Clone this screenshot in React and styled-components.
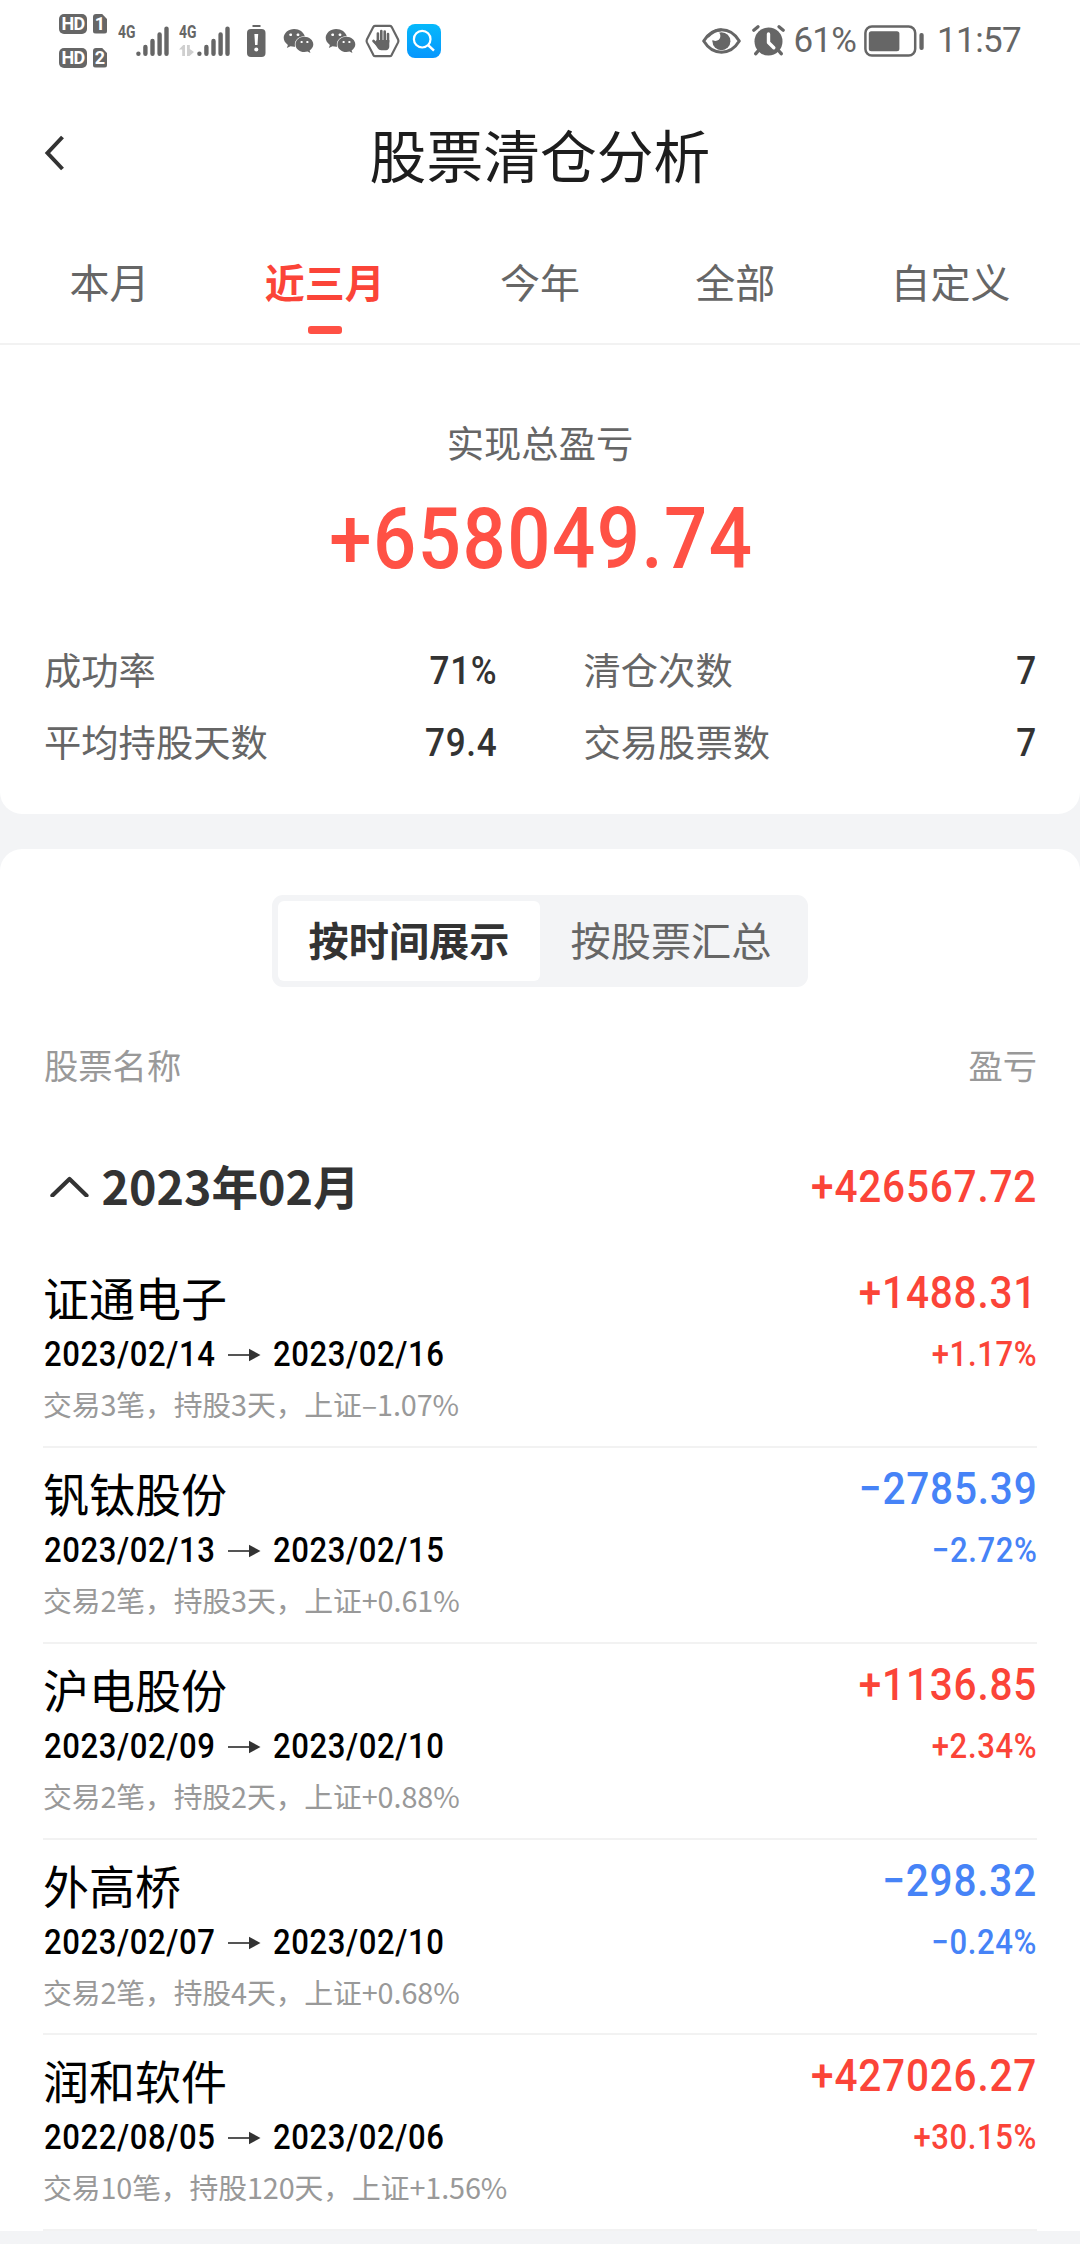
import React from "react";
import styled, { createGlobalStyle } from "styled-components";
import { FaWeixin } from "react-icons/fa";

const RED = "#fb4438";
const BLUE = "#4683f7";
const ICON = "#666666";

const tabs = ["本月", "近三月", "今年", "全部", "自定义"];

const stats = [
  { label: "成功率", value: "71%" },
  { label: "清仓次数", value: "7" },
  { label: "平均持股天数", value: "79.4" },
  { label: "交易股票数", value: "7" },
];

const trades = [
  {
    name: "证通电子",
    from: "2023/02/14",
    to: "2023/02/16",
    detail: "交易3笔，持股3天，上证–1.07%",
    amount: "+1488.31",
    percent: "+1.17%",
  },
  {
    name: "钒钛股份",
    from: "2023/02/13",
    to: "2023/02/15",
    detail: "交易2笔，持股3天，上证+0.61%",
    amount: "−2785.39",
    percent: "−2.72%",
    loss: true,
  },
  {
    name: "沪电股份",
    from: "2023/02/09",
    to: "2023/02/10",
    detail: "交易2笔，持股2天，上证+0.88%",
    amount: "+1136.85",
    percent: "+2.34%",
  },
  {
    name: "外高桥",
    from: "2023/02/07",
    to: "2023/02/10",
    detail: "交易2笔，持股4天，上证+0.68%",
    amount: "−298.32",
    percent: "−0.24%",
    loss: true,
  },
  {
    name: "润和软件",
    from: "2022/08/05",
    to: "2023/02/06",
    detail: "交易10笔，持股120天，上证+1.56%",
    amount: "+427026.27",
    percent: "+30.15%",
  },
];

function App() {
  return (
    <>
      <GlobalStyle />
      <Page>
        <TopCard>
          <StatusBar />
          <TitleBar>
            <BackIcon />
            <Title>股票清仓分析</Title>
          </TitleBar>
          <Tabs>
            {tabs.map((tab, i) => (
              <Tab key={tab} $active={i === 1}>
                {tab}
              </Tab>
            ))}
          </Tabs>
          <TotalLabel>实现总盈亏</TotalLabel>
          <Total>+658049.74</Total>
          <Stats>
            {stats.map((s) => (
              <Stat key={s.label}>
                <span>{s.label}</span>
                <StatValue>{s.value}</StatValue>
              </Stat>
            ))}
          </Stats>
        </TopCard>

        <ListCard>
          <Segment>
            <SegmentItem $active>按时间展示</SegmentItem>
            <SegmentItem>按股票汇总</SegmentItem>
          </Segment>
          <ColumnHead>
            <span>股票名称</span>
            <span>盈亏</span>
          </ColumnHead>
          <MonthRow>
            <Month>
              <ChevronUp />
              2023年02月
            </Month>
            <Amount>+426567.72</Amount>
          </MonthRow>
          {trades.map((t) => (
            <Trade key={t.name} {...t} />
          ))}
        </ListCard>
      </Page>
    </>
  );
}

const Trade = ({ name, from, to, detail, amount, percent, loss }) => (
  <TradeRow>
    <div>
      <StockName>{name}</StockName>
      <Dates>
        <DateText>{from}</DateText>
        <Arrow />
        <DateText>{to}</DateText>
      </Dates>
      <Detail>{detail}</Detail>
    </div>
    <TradeRight>
      <Amount $loss={loss}>{amount}</Amount>
      <Percent $loss={loss}>{percent}</Percent>
    </TradeRight>
  </TradeRow>
);

const StatusBar = () => (
  <Bar>
    <HdColumn>
      <HdRow>
        <Hd>HD</Hd>
        <Sim>1</Sim>
      </HdRow>
      <HdRow>
        <Hd>HD</Hd>
        <Sim>2</Sim>
      </HdRow>
    </HdColumn>
    <Signal />
    <Signal data />
    <BatteryAlert />
    <Wechat />
    <Wechat />
    <HandBadge />
    <SearchBadge />
    <Spacer />
    <EyeIcon />
    <AlarmIcon />
    <BatteryText>61%</BatteryText>
    <BatteryIcon />
    <Clock>11:57</Clock>
  </Bar>
);

const Signal = ({ data }) => (
  <SignalBox>
    <Net>
      <NetLabel>4G</NetLabel>
      {data && (
        <svg width="15" height="11" viewBox="0 0 15 11" fill="#cfcfcf">
          <path d="M6 0v11H3.2V4.6H0L4.2 0zM8 0h2.8v4l4.2 3L10.500 11H8z" />
        </svg>
      )}
    </Net>
    <svg width="33" height="32" viewBox="0 0 33 32" stroke={ICON} strokeWidth="4.4" strokeLinecap="round">
      <path d="M2.4 28.6v.2M9.4 22v6.8M16.5 16v12.8M23.6 9.4v19.4M30.5 3.6v25.2" />
    </svg>
  </SignalBox>
);

const BatteryAlert = () => (
  <Glyph $ml={17} width="19" height="32" viewBox="0 0 19 32">
    <path d="M5.5 1h8" stroke={ICON} strokeWidth="2" />
    <rect y="4" width="18.5" height="28" rx="4" fill={ICON} />
    <path d="M7.4 9h3.8l-.7 11H8.1z" fill="#fff" />
    <circle cx="9.3" cy="24.4" r="2" fill="#fff" />
  </Glyph>
);

const HandBadge = () => (
  <Glyph $ml={9} width="35" height="34" viewBox="0 0 35 34">
    <path
      d="M10.2 1.8h14.6c.8 0 1.4.4 1.8 1l6.5 12.7c.4.9.4 2 0 2.9l-6.5 12.7c-.4.7-1 1.1-1.8 1.1H10.2c-.8 0-1.4-.4-1.8-1.1L1.9 18.4c-.4-.9-.4-2 0-2.9L8.4 2.8c.4-.6 1-1 1.800-1z"
      fill="none"
      stroke={ICON}
      strokeWidth="2.2"
    />
    {/* open palm: four fingers and a thumb */}
    <path
      d="M12.9 18V9.5M16.3 17V7M19.7 17V7.5M23 18V10M13 21.500l-4.5-4.5"
      stroke={ICON}
      strokeWidth="2.6"
      strokeLinecap="round"
    />
    <path d="M11.6 16h12.7v6.5c0 2-1.3 3.7-3.3 3.7h-4.8c-1.6 0-2.7-.7-3.5-2l-3.2-5z" fill={ICON} />
  </Glyph>
);

const SearchBadge = () => (
  <Glyph $ml={7} width="34" height="34" viewBox="0 0 34 34">
    <defs>
      <linearGradient id="searchBg" x1="0" y1="0" x2="0" y2="1">
        <stop offset="0" stopColor="#05b9fb" />
        <stop offset="1" stopColor="#0796fd" />
      </linearGradient>
    </defs>
    <rect width="34" height="34" rx="8" fill="url(#searchBg)" />
    <circle cx="15.2" cy="15.2" r="8.3" fill="none" stroke="#fff" strokeWidth="2.2" />
    <path d="M21 21l6 5.6" stroke="#fff" strokeWidth="2.4" />
  </Glyph>
);

const EyeIcon = () => (
  <Glyph width="39" height="26" viewBox="0 0 39 26">
    <path
      d="M1.7 13C6 6 12 1.8 19.5 1.8S33 6 37.3 13C33 20 27 24.2 19.5 24.2S6 20 1.7 13z"
      fill="none"
      stroke={ICON}
      strokeWidth="3"
      strokeLinejoin="round"
    />
    <circle cx="19.4" cy="13.2" r="9" fill={ICON} />
    <circle cx="13.4" cy="8" r="5" fill="#fff" />
    <path d="M5.5 8.8C9.5 4.6 14 2 19.5 1.8" fill="none" stroke={ICON} strokeWidth="3" />
  </Glyph>
);

const AlarmIcon = () => (
  <Glyph $ml={11} width="33" height="31" viewBox="0 0 33 31">
    <circle cx="16.5" cy="16.5" r="14" fill={ICON} />
    <path d="M1.8 5.2L6 1.7M31.2 5.2L27 1.7" stroke={ICON} strokeWidth="3.2" strokeLinecap="round" />
    <path d="M6.5 25.5L3.8 28.6M26.5 25.5l2.7 3.1" stroke={ICON} strokeWidth="3.4" strokeLinecap="round" />
    <path d="M16.5 9v8.5l5.3 5.3" fill="none" stroke="#fff" strokeWidth="3.4" strokeLinecap="round" strokeLinejoin="round" />
  </Glyph>
);

const BatteryIcon = () => (
  <Glyph $ml={8} width="60" height="32" viewBox="0 0 60 32">
    <rect x="1.4" y="1.4" width="49.8" height="29.2" rx="6.5" fill="none" stroke={ICON} strokeWidth="2.5" />
    <rect x="4.8" y="6.2" width="30.6" height="20" rx="2.5" fill={ICON} />
    <rect x="55.4" y="8" width="4.3" height="17" rx="2" fill={ICON} />
  </Glyph>
);

const BackIcon = () => (
  <svg width="24" height="38" viewBox="0 0 24 38" fill="none" stroke="#333" strokeWidth="4">
    <path d="M20.5 3L5.5 19l15 16" />
  </svg>
);

const ChevronUp = () => (
  <svg width="58.5" height="24" viewBox="0 0 58.5 24" fill="none" stroke="#333" strokeWidth="4.2" strokeLinecap="round" strokeLinejoin="round">
    <path d="M9.4 22.500L26.500 6 43.500 22.500" />
  </svg>
);

const Arrow = () => (
  <ArrowSvg width="33" height="14" viewBox="0 0 33 14">
    <path d="M0 7h22" stroke="#555" strokeWidth="2" />
    <path d="M21 .8L32.500 7 21 13.2z" fill="#333" />
  </ArrowSvg>
);

const GlobalStyle = createGlobalStyle`
  body {
    margin: 0;
    background: #f3f4f6;
    font-family: "Noto Sans CJK SC", sans-serif;
  }
  * {
    box-sizing: border-box;
  }
`;

const Page = styled.div`
  width: 1080px;
  height: 2244px;
  overflow: hidden;
  background: #f3f4f6;
`;

const TopCard = styled.section`
  height: 814px;
  background: #fff;
  border-radius: 0 0 22px 22px;
`;

const Bar = styled.div`
  display: flex;
  align-items: center;
  height: 81px;
  padding: 0 60px 0 59px;
  color: ${ICON};
`;

const Glyph = styled.svg`
  flex: none;
  margin-left: ${(p) => p.$ml || 0}px;
`;

const HdColumn = styled.div`
  display: flex;
  flex-direction: column;
  gap: 14px;
`;

const HdRow = styled.div`
  display: flex;
  gap: 6px;
  font: 700 18px/20px Roboto, sans-serif;
  color: #fff;
  text-align: center;
`;

const Hd = styled.div`
  width: 28px;
  height: 20px;
  border-radius: 5px;
  background: ${ICON};
  letter-spacing: -0.8px;
`;

const Sim = styled.div`
  width: 14px;
  height: 20px;
  border-radius: 3px;
  background: ${ICON};
  clip-path: polygon(0 0, 62% 0, 100% 28%, 100% 100%, 0 100%);
`;

const SignalBox = styled.div`
  display: flex;
  margin-left: 11px;
  height: 32px;

  & + & {
    margin-left: 10px;
  }
`;

const Net = styled.div`
  display: flex;
  flex-direction: column;
  gap: 5px;
  width: 18px;
`;

const NetLabel = styled.span`
  font: 700 18.5px/15px Roboto, sans-serif;
  transform: scaleX(0.75);
  transform-origin: left;
`;

const Wechat = styled(FaWeixin)`
  flex: none;
  width: 31px;
  height: 28px;
  margin-left: 17px;

  & + & {
    margin-left: 11px;
  }
`;

const Spacer = styled.div`
  flex: 1;
`;

const BatteryText = styled.span`
  margin: 1px 0 0 8px;
  font: 400 35px/44px Roboto, sans-serif;
  letter-spacing: -0.8px;
`;

const Clock = styled.span`
  width: 84px;
  margin: 1px -1px 0 13px;
  font: 400 35px/44px Roboto, sans-serif;
  letter-spacing: -0.6px;
`;

const TitleBar = styled.header`
  display: grid;
  grid-template-columns: 72px 1fr 72px;
  align-items: center;
  height: 143px;

  > svg {
    margin-left: 42px;
  }
`;

const Title = styled.h1`
  margin: 0;
  font-size: 56.8px;
  font-weight: 400;
  line-height: 72px;
  text-align: center;
  color: #1d1d1d;
`;

const Tabs = styled.nav`
  display: flex;
  justify-content: space-between;
  height: 121px;
  padding: 29px 69.5px 0;
  border-bottom: 2px solid #f2f2f2;
`;

const Tab = styled.div`
  display: flex;
  flex-direction: column;
  align-items: center;
  font-size: 40px;
  line-height: 56px;
  color: ${(p) => (p.$active ? RED : "#666")};
  font-weight: ${(p) => (p.$active ? 700 : 400)};

  &::after {
    content: "";
    width: 34px;
    height: 8px;
    margin-top: 17px;
    border-radius: 3px;
    background: ${(p) => (p.$active ? "#ff5145" : "transparent")};
  }
`;

const TotalLabel = styled.div`
  margin-top: 72px;
  font-size: 37.3px;
  line-height: 50px;
  text-align: center;
  color: #666;
`;

// figures are set slightly condensed and tracked out
const Figure = styled.div`
  font-family: Roboto, sans-serif;
  font-weight: 500;
  letter-spacing: 0.02em;
  white-space: nowrap;
  transform: scaleX(0.9);
  transform-origin: right;
`;

const Total = styled(Figure)`
  margin-top: 23px;
  padding-left: 3px;
  font-size: 84.5px;
  line-height: 100px;
  text-align: center;
  transform-origin: center;
  color: #ff5145;
`;

const Stats = styled.div`
  display: grid;
  grid-template-columns: 1fr 1fr;
  column-gap: 86px;
  margin-top: 43px;
  padding: 0 43px 0 44px;
`;

const Stat = styled.div`
  display: flex;
  justify-content: space-between;
  height: 72px;
  font-size: 37.3px;
  line-height: 72px;
  color: #666;
`;

const StatValue = styled(Figure)`
  padding-top: 2px;
  font-size: 39px;
  color: #333;
`;

const ListCard = styled.section`
  height: 1382px;
  margin-top: 35px;
  padding: 46px 43px 0;
  background: #fff;
  border-radius: 22px 22px 0 0;
`;

const Segment = styled.div`
  display: flex;
  width: 536px;
  height: 92px;
  margin: 0 auto;
  padding: 6px;
  border-radius: 11px;
  background: #f3f4f6;
`;

const SegmentItem = styled.div`
  flex: 1;
  border-radius: 6px;
  font-size: 40.2px;
  line-height: 75px;
  text-align: center;
  color: ${(p) => (p.$active ? "#333" : "#666")};
  font-weight: ${(p) => (p.$active ? 700 : 400)};
  background: ${(p) => (p.$active ? "#fff" : "transparent")};
`;

const ColumnHead = styled.div`
  display: flex;
  justify-content: space-between;
  margin-top: 52px;
  padding-left: 1px;
  font-size: 34.3px;
  line-height: 50px;
  color: #999;
`;

const MonthRow = styled.div`
  display: flex;
  justify-content: space-between;
  align-items: center;
  height: 60px;
  margin-top: 66.25px;
  margin-bottom: 37px;
`;

const Month = styled.div`
  display: flex;
  align-items: center;
  font-size: 46.6px;
  font-weight: 700;
  line-height: 60px;
  color: #333;
`;

const Amount = styled(Figure)`
  font-size: 45px;
  line-height: 54px;
  color: ${(p) => (p.$loss ? BLUE : RED)};

  ${MonthRow} & {
    padding-top: 4px;
  }
`;

const Percent = styled(Amount)`
  margin-top: 12px;
  font-size: 34.5px;
  line-height: 44px;
`;

const TradeRow = styled.div`
  display: flex;
  justify-content: space-between;
  height: 195.75px;
  padding-top: 14px;
  border-bottom: 2px solid #f2f2f2;
`;

const TradeRight = styled.div`
  text-align: right;
`;

const StockName = styled.div`
  font-size: 46px;
  line-height: 60px;
  color: #000;
`;

const Dates = styled.div`
  display: flex;
  align-items: center;
  height: 44px;
  margin-top: 6px;
  padding-left: 1px;
`;

const DateText = styled(Figure)`
  width: 172px;
  font-size: 34.5px;
  line-height: 44px;
  transform-origin: left;
  color: #000;
`;

const ArrowSvg = styled.svg`
  flex: none;
  margin: 2px 12px 0;
`;

const Detail = styled.div`
  margin-top: 8px;
  font-size: 28.8px;
  line-height: 40px;
  letter-spacing: -0.1px;
  color: #999;
`;

export default App;
